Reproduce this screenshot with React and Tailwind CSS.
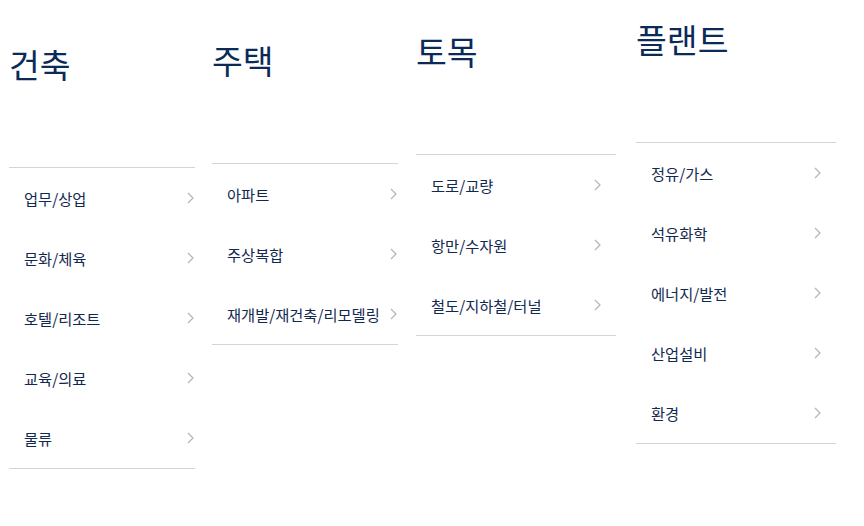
const columns = [
  { title: '건축', mt: 'mt-[44px]', ml: 'ml-[9px]', w: 'w-[186px]', items: ['업무/상업', '문화/체육', '호텔/리조트', '교육/의료', '물류'] },
  { title: '주택', mt: 'mt-[40px]', ml: 'ml-[17px]', w: 'w-[186px]', items: ['아파트', '주상복합', '재개발/재건축/리모델링'] },
  { title: '토목', mt: 'mt-[31px]', ml: 'ml-[18px]', w: 'w-[200px]', items: ['도로/교량', '항만/수자원', '철도/지하철/터널'] },
  { title: '플랜트', mt: 'mt-[19px]', ml: 'ml-[20px]', w: 'w-[200px]', items: ['정유/가스', '석유화학', '에너지/발전', '산업설비', '환경'] },
];

function Chevron() {
  return (
    <svg width="7" height="12" viewBox="0 0 7 12" fill="none" className="shrink-0">
      <polyline points="1,1 6,6 1,11" stroke="#b4b4b4" strokeWidth="1.2" />
    </svg>
  );
}

export default function App() {
  return (
    <div
      className="w-[864px] h-[526px] bg-white flex items-start overflow-hidden"
      style={{ fontFamily: '"Noto Sans CJK KR", "Noto Sans", sans-serif' }}
    >
      {columns.map((col) => (
        <div key={col.title} className={`${col.mt} ${col.ml} ${col.w} shrink-0`}>
          <h2 className="text-[33.5px] leading-[40px] text-[#0a2a57] font-normal mb-[83px]">{col.title}</h2>
          <ul className="border-t border-b border-[#d4d4d4]">
            {col.items.map((item) => (
              <li key={item} className="h-[60px] flex items-center">
                <a href="#" className="w-[186px] flex items-center justify-between pl-[15px] pr-[1px] text-[15.3px] text-[#12294f]">
                  <span>{item}</span>
                  <Chevron />
                </a>
              </li>
            ))}
          </ul>
        </div>
      ))}
    </div>
  );
}
